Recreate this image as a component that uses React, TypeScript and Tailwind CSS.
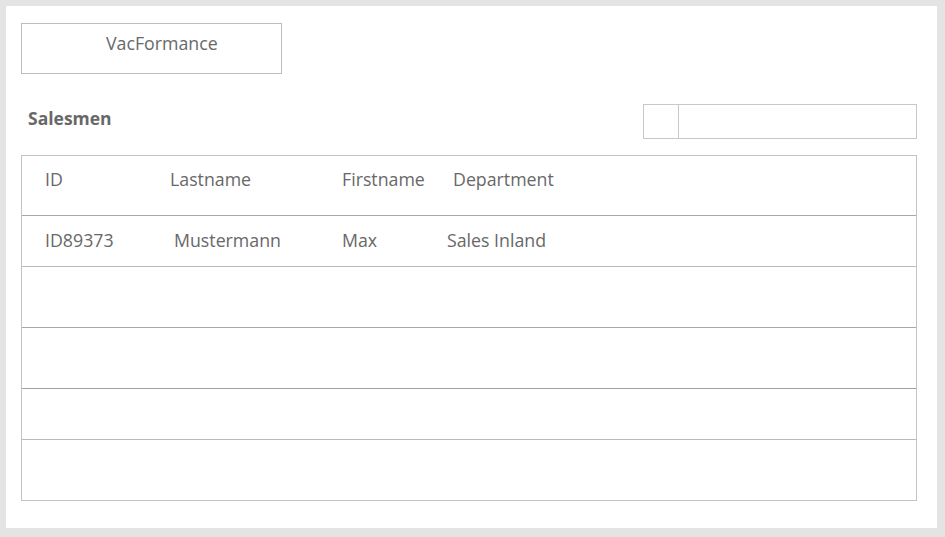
const headers = [
  { label: 'ID', w: 'w-[125px]' },
  { label: 'Lastname', w: 'w-[172px]' },
  { label: 'Firstname', w: 'w-[111px]' },
  { label: 'Department', w: 'w-auto' },
]

const salesmen = [
  { id: 'ID89373', lastname: 'Mustermann', firstname: 'Max', department: 'Sales Inland' },
]

export default function App() {
  return (
    <div
      className="h-[537px] w-[945px] overflow-hidden bg-[#e4e4e4] pl-[6px] pt-[6px] text-[#686868]"
      style={{ fontFamily: '"Open Sans", "Noto Sans", sans-serif' }}
    >
      <div className="flex h-[522px] w-[931px] flex-col bg-white pl-[15px] pr-[20px] pt-[17px]">
        <div className="flex h-[51px] w-[261px] border border-[#bdbdbd] pl-[84px] pt-[6px] text-[17.75px] leading-[26px]">
          VacFormance
        </div>

        <div className="mt-[30px] flex h-[35px] items-center justify-between">
          <h2 className="-mt-[8px] pl-[7px] text-[17.5px] font-bold leading-[26px]">Salesmen</h2>
          <div className="flex h-[35px] w-[274px] border border-[#c8c8c8]">
            <div className="w-[35px] border-r border-[#c8c8c8]" />
            <input className="min-w-0 flex-1 outline-none" />
          </div>
        </div>

        <div className="mt-[16px] flex w-[896px] flex-col border-x border-t border-[#c4c4c4]">
          <div className="flex h-[60px] border-b border-[#a8a8a8] pl-[23px] pt-[10px] text-[17.75px] leading-[26px]">
            {headers.map((h) => (
              <div key={h.label} className={h.w}>
                {h.label}
              </div>
            ))}
          </div>
          {salesmen.map((s) => (
            <div
              key={s.id}
              className="flex h-[51px] items-center border-b border-[#bababa] pb-[2px] pl-[23px] text-[17.75px] leading-[26px]"
            >
              <div className="w-[129px]">{s.id}</div>
              <div className="w-[168px]">{s.lastname}</div>
              <div className="w-[105px]">{s.firstname}</div>
              <div>{s.department}</div>
            </div>
          ))}
          <div className="h-[61px] border-b border-[#a8a8a8]" />
          <div className="h-[61px] border-b border-[#a0a0a0]" />
          <div className="h-[51px] border-b border-[#bababa]" />
          <div className="h-[61px] border-b border-[#c4c4c4]" />
        </div>
      </div>
    </div>
  )
}
